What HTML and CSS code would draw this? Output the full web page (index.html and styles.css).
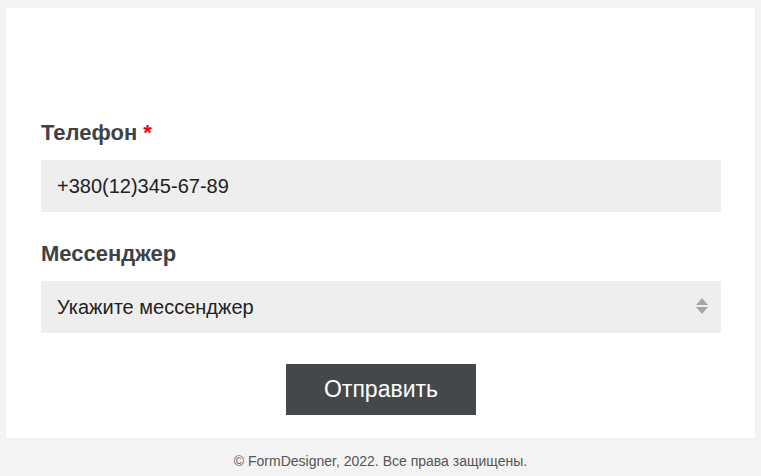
FILE: index.html
```html
<!DOCTYPE html>
<html lang="ru">
<head>
  <meta charset="UTF-8">
  <title>Форма</title>
  <link rel="stylesheet" href="styles.css">
</head>
<body>
  <div class="page">
    <form class="card" onsubmit="return false">
      <div class="field">
        <label for="phone">Телефон <span class="req">*</span></label>
        <input type="text" id="phone" value="+380(12)345-67-89" autofocus>
      </div>
      <div class="field">
        <label for="messenger">Мессенджер</label>
        <div class="select-wrap">
          <select id="messenger">
            <option>Укажите мессенджер</option>
            <option>Telegram</option>
            <option>Viber</option>
            <option>WhatsApp</option>
          </select>
          <svg class="arrows" width="14" height="18" viewBox="0 0 14 18">
            <path d="M7 1 L13 8 L1 8 Z" fill="#a3a6ad"/>
            <path d="M1 10 L13 10 L7 17 Z" fill="#a3a6ad"/>
          </svg>
        </div>
      </div>
      <div class="actions">
        <button type="submit">Отправить</button>
      </div>
    </form>
    <p class="footer">© FormDesigner, 2022. Все права защищены.</p>
  </div>
</body>
</html>
```

FILE: styles.css
```css
body {
  margin: 0;
  background-color: #f3f3f3;
  font-family: "Liberation Sans", Arial, sans-serif;
}
.page {
  padding: 8px 6px 0 6px;
}
.card {
  display: block;
  background-color: #ffffff;
  padding: 112px 34px 23px 35px;
}
.field {
  margin-bottom: 29px;
}
.field label {
  display: block;
  font-size: 22px;
  font-weight: bold;
  color: #3f4245;
  line-height: 25px;
  margin-bottom: 15px;
}
.req {
  color: #ee0000;
}
input, select {
  display: block;
  box-sizing: border-box;
  width: 100%;
  height: 52px;
  border: none;
  outline: none;
  background-color: #eeeeee;
  color: #222222;
  font-family: "Liberation Sans", Arial, sans-serif;
  font-size: 20px;
  padding: 0 16px;
  caret-color: #222;
}
select {
  appearance: none;
  -webkit-appearance: none;
  border-radius: 0;
}
.select-wrap {
  position: relative;
}
.arrows {
  position: absolute;
  right: 12px;
  top: 16px;
  pointer-events: none;
}
.field + .field {
  margin-bottom: 31px;
}
.actions {
  display: flex;
  justify-content: center;
}
button {
  width: 190px;
  height: 51px;
  background-color: #45484b;
  color: #ffffff;
  border: none;
  font-family: "Liberation Sans", Arial, sans-serif;
  font-size: 23px;
  cursor: pointer;
}
.footer {
  margin: 0;
  padding: 15px 0;
  text-align: center;
  font-size: 14px;
  color: #555555;
}
```
